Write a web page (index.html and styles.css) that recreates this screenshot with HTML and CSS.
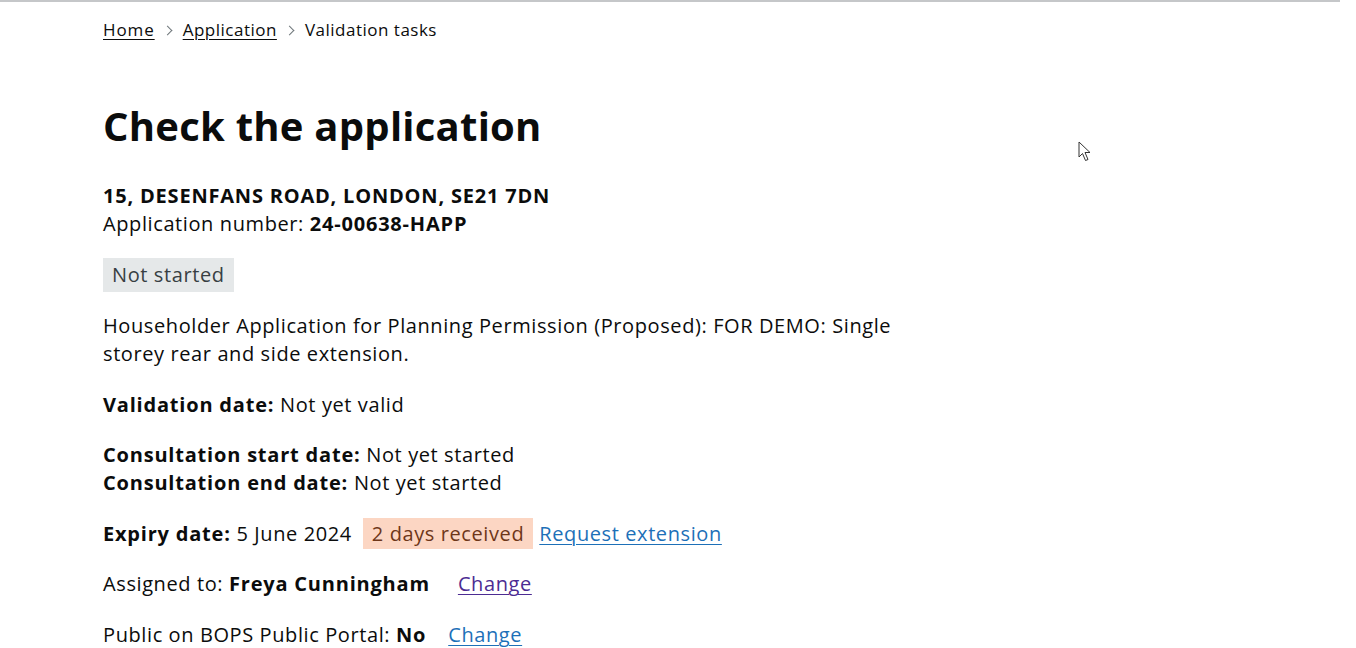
FILE: index.html
```html
<!DOCTYPE html>
<html lang="en">
<head>
<meta charset="utf-8">
<title>Check the application</title>
<link rel="stylesheet" href="styles.css">
</head>
<body>
<div class="topline"></div>
<div class="container">
  <nav class="breadcrumbs">
    <a href="#" class="crumb-link">Home</a>
    <span class="chev"></span>
    <a href="#" class="crumb-link">Application</a>
    <span class="chev"></span>
    <span class="crumb-current">Validation tasks</span>
  </nav>
  <main class="main">
    <h1 class="heading">Check the application</h1>
    <p class="address">15, DESENFANS ROAD, LONDON, SE21 7DN</p>
    <p class="line">Application number: <strong>24-00638-HAPP</strong></p>
    <div class="tag-row"><span class="tag-grey">Not started</span></div>
    <p class="para desc">Householder Application for Planning Permission (Proposed): FOR DEMO: Single storey rear and side extension.</p>
    <p class="para"><strong>Validation date:</strong> Not yet valid</p>
    <p class="para"><strong>Consultation start date:</strong> Not yet started<br><strong>Consultation end date:</strong> Not yet started</p>
    <p class="para"><strong>Expiry date:</strong> 5 June 2024<span class="tag-orange">2 days received</span><a href="#" class="link req">Request extension</a></p>
    <p class="para">Assigned to: <strong>Freya Cunningham</strong><a href="#" class="link visited change1">Change</a></p>
    <p class="para">Public on BOPS Public Portal: <strong>No</strong><a href="#" class="link change2">Change</a></p>
  </main>
</div>
<svg class="cursor" width="14" height="22" viewBox="0 0 14 22" aria-hidden="true">
  <path d="M1 1 L1 16 L4.5 12.5 L7.5 19.5 L10 18.5 L7 11.5 L12 11.5 Z" fill="#fff" stroke="#333" stroke-width="1"/>
</svg>
</body>
</html>
```
FILE: styles.css
```css
html, body {
  margin: 0;
  padding: 0;
  background: #fff;
}
body {
  font-family: "Open Sans", "Noto Sans", sans-serif;
  color: #0b0c0c;
  position: relative;
  height: 648px;
  overflow: hidden;
}
.topline {
  width: 1340px;
  height: 2px;
  background: #c5c7c9;
}
.container {
  padding-left: 103px;
  width: 820px;
}
.breadcrumbs {
  display: flex;
  align-items: center;
  font-size: 17px;
  line-height: 24px;
  letter-spacing: 0.5px;
  margin-top: 16px;
  color: #0b0c0c;
}
.crumb-link {
  color: #0b0c0c;
  text-decoration: underline;
  text-underline-offset: 3px;
  text-decoration-thickness: 1px;
}
.crumb-link:first-child {
  letter-spacing: 0.9px;
}
.chev {
  display: inline-block;
  width: 6px;
  height: 6px;
  border-top: 1px solid #6f777b;
  border-right: 1px solid #6f777b;
  transform: rotate(45deg);
  margin: 1px 12px 0 9px;
}
.crumb-current {
  color: #0b0c0c;
}
.main {
  margin-top: 59px;
}
.heading {
  font-size: 40px;
  line-height: 50px;
  font-weight: 700;
  letter-spacing: 0.25px;
  margin: 0 0 31.4px 0;
}
p {
  margin: 0;
  font-size: 20px;
  line-height: 28px;
  letter-spacing: 0.6px;
}
strong {
  font-weight: 700;
  letter-spacing: 0.8px;
}
.address {
  font-weight: 700;
  letter-spacing: 0.8px;
}
.tag-row {
  display: flex;
  margin: 19.6px 0 20.4px 0;
}
.tag-grey {
  display: block;
  padding: 0 9px;
  font-size: 20px;
  line-height: 34px;
  letter-spacing: 0.6px;
  background: #e5e8e9;
  color: #383f43;
}
.tag-orange {
  background: #fcd6c3;
  color: #6e3619;
  padding: 2px 9px;
  margin-left: 11px;
}
.para {
  margin-bottom: 22.5px;
}
.link {
  color: #1d70b8;
  text-decoration: underline;
  text-underline-offset: 3px;
  text-decoration-thickness: 1px;
}
.req { margin-left: 6px; }
.visited { color: #4c2c92; }
.change1 { margin-left: 28px; }
.change2 { margin-left: 22px; }
.cursor {
  position: absolute;
  left: 1078px;
  top: 141px;
}
```
